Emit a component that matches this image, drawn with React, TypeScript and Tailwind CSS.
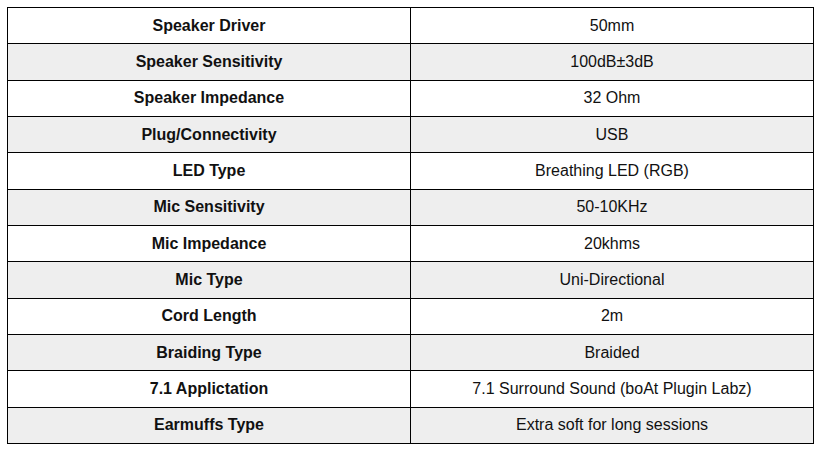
const specs: [string, string][] = [
  ["Speaker Driver", "50mm"],
  ["Speaker Sensitivity", "100dB±3dB"],
  ["Speaker Impedance", "32 Ohm"],
  ["Plug/Connectivity", "USB"],
  ["LED Type", "Breathing LED (RGB)"],
  ["Mic Sensitivity", "50-10KHz"],
  ["Mic Impedance", "20khms"],
  ["Mic Type", "Uni-Directional"],
  ["Cord Length", "2m"],
  ["Braiding Type", "Braided"],
  ["7.1 Applictation", "7.1 Surround Sound (boAt Plugin Labz)"],
  ["Earmuffs Type", "Extra soft for long sessions"],
];

export default function App() {
  return (
    <div className="w-[820px] h-[452px] bg-white pt-[7px] pl-[7px] font-['Liberation_Sans',Arial,sans-serif] text-[16px] text-[#111]">
      <table className="w-[807px] h-[437px] border-collapse table-fixed">
        <tbody>
          {specs.map(([label, value], i) => (
            <tr key={label} className={i % 2 === 1 ? "bg-[#eeeeee]" : "bg-white"}>
              <td className="w-[403px] border border-black text-center align-middle font-bold p-0">
                {label}
              </td>
              <td className="border border-black text-center align-middle p-0">{value}</td>
            </tr>
          ))}
        </tbody>
      </table>
    </div>
  );
}
